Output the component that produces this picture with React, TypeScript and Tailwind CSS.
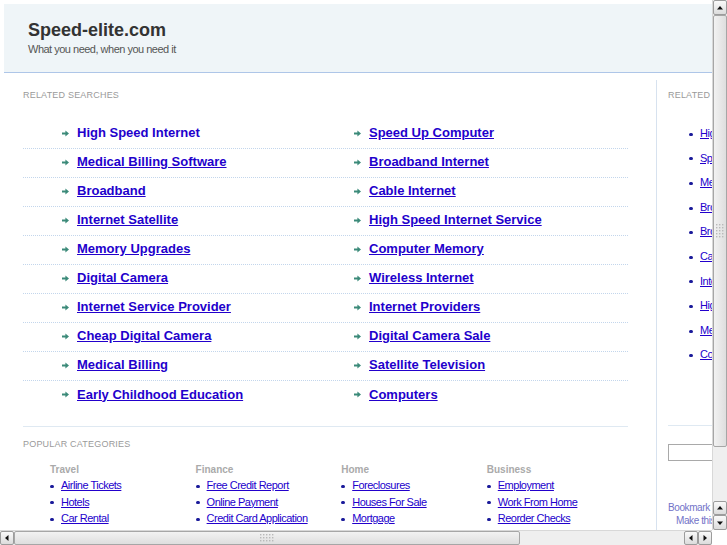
import React from "react";

const related: [string, string][] = [
  ["High Speed Internet", "Speed Up Computer"],
  ["Medical Billing Software", "Broadband Internet"],
  ["Broadband", "Cable Internet"],
  ["Internet Satellite", "High Speed Internet Service"],
  ["Memory Upgrades", "Computer Memory"],
  ["Digital Camera", "Wireless Internet"],
  ["Internet Service Provider", "Internet Providers"],
  ["Cheap Digital Camera", "Digital Camera Sale"],
  ["Medical Billing", "Satellite Television"],
  ["Early Childhood Education", "Computers"],
];

const categories = [
  { title: "Travel", links: ["Airline Tickets", "Hotels", "Car Rental"] },
  { title: "Finance", links: ["Free Credit Report", "Online Payment", "Credit Card Application"] },
  { title: "Home", links: ["Foreclosures", "Houses For Sale", "Mortgage"] },
  { title: "Business", links: ["Employment", "Work From Home", "Reorder Checks"] },
];

const sidebarLinks = [
  "High Speed Internet",
  "Speed Up Computer",
  "Medical Billing Software",
  "Broadband",
  "Broadband Internet",
  "Cable Internet",
  "Internet Satellite",
  "High Speed Internet Service",
  "Memory Upgrades",
  "Computer Memory",
];

function Arrow() {
  return (
    <svg width="7" height="7" viewBox="0 0 7 7" className="shrink-0">
      <path d="M0 2.6h3.4V0.6L7 3.5 3.4 6.4V4.4H0z" fill="#3b8a79" />
    </svg>
  );
}

function Bullet() {
  return <span className="w-[4px] h-[3px] mt-[2px] rounded-full bg-[#1a1a9a] shrink-0" />;
}

function SearchLink({ text, plain }: { text: string; plain?: boolean }) {
  return (
    <div className="w-[292px] shrink-0 pl-[39px] flex items-center gap-[8px]">
      <Arrow />
      <a
        href="#"
        className={`text-[13px] font-bold text-[#2200cc] leading-[16px] ${plain ? "no-underline" : "underline"}`}
      >
        {text}
      </a>
    </div>
  );
}

function Triangle({ dir }: { dir: "up" | "down" | "left" | "right" }) {
  const d = {
    up: "M1 5.5L4 2l3 3.5z",
    down: "M1 2.5L4 6l3-3.5z",
    left: "M5.5 1L2 4l3.5 3z",
    right: "M2.5 1L6 4 2.5 7z",
  }[dir];
  return (
    <svg width="8" height="8" viewBox="0 0 8 8">
      <path d={d} fill="#111" />
    </svg>
  );
}

function ScrollButton({ dir, className }: { dir: "up" | "down" | "left" | "right"; className: string }) {
  return (
    <div
      className={`${className} flex items-center justify-center border border-[#9c9c9c] rounded-[2px] bg-gradient-to-b from-[#fafafa] to-[#dcdcdc] box-border`}
    >
      <Triangle dir={dir} />
    </div>
  );
}

function Grip({ vertical }: { vertical?: boolean }) {
  const cols = vertical ? 3 : 5;
  const rows = vertical ? 5 : 3;
  const dots = [];
  for (let r = 0; r < rows; r++)
    for (let c = 0; c < cols; c++)
      dots.push(<rect key={`${r}-${c}`} x={c * 3} y={r * 3} width="1.4" height="1.4" fill="#b9b9b9" />);
  return (
    <svg width={cols * 3} height={rows * 3}>
      {dots}
    </svg>
  );
}

export default function App() {
  return (
    <div className="w-[727px] h-[545px] overflow-hidden flex flex-col bg-white font-['Liberation_Sans',Arial,sans-serif]">
      <div className="flex h-[530px]">
        {/* page */}
        <div className="w-[712px] overflow-hidden">
          <div className="w-[1000px] pt-[4px] pl-[4px]">
            <header className="h-[69px] bg-[#eff5f8] border-b border-[#aec6e8] pl-[24px] pt-[15px]">
              <h1 className="text-[18px] leading-[22px] font-bold text-[#333]">Speed-elite.com</h1>
              <p className="mt-[2px] text-[11px] leading-[13px] tracking-[-0.5px] text-[#555]">
                What you need, when you need it
              </p>
            </header>

            <div className="flex pl-[19px] pt-[7px]">
              {/* main column */}
              <div className="w-[605px] shrink-0">
                <h2 className="pt-[9px] text-[9px] leading-[12px] text-[#9a9a9a] tracking-[0.2px] uppercase">
                  Related Searches
                </h2>
                <div className="mt-[19px]">
                  {related.map(([a, b], i) => (
                    <div
                      key={a}
                      className={`flex items-center h-[29px] pb-[2px] ${
                        i < related.length - 1 ? "border-b border-dotted border-[#c3d6ec]" : ""
                      }`}
                    >
                      <SearchLink text={a} plain={i === 0} />
                      <SearchLink text={b} />
                    </div>
                  ))}
                </div>
                <div className="mt-[16px] border-t border-[#dfe9f2]" />
                <h2 className="mt-[11px] text-[9px] leading-[12px] text-[#9a9a9a] tracking-[0.2px] uppercase">
                  Popular Categories
                </h2>
                <div className="flex pl-[27px] mt-[14px]">
                  {categories.map((cat) => (
                    <div key={cat.title} className="w-[145.6px] shrink-0">
                      <h3 className="text-[10px] leading-[12px] font-bold text-[#aaa]">{cat.title}</h3>
                      <ul className="mt-[1px]">
                        {cat.links.map((l) => (
                          <li key={l} className="flex items-center gap-[7px] leading-[16.5px]">
                            <Bullet />
                            <a href="#" className="text-[11px] tracking-[-0.5px] text-[#2200cc] underline">
                              {l}
                            </a>
                          </li>
                        ))}
                      </ul>
                    </div>
                  ))}
                </div>
              </div>

              {/* sidebar */}
              <aside className="ml-[28px] w-[220px] shrink-0 border-l border-[#d7e2ef] pl-[11px] h-[460px]">
                <h2 className="pt-[9px] text-[9px] leading-[12px] text-[#9a9a9a] tracking-[0.2px] uppercase">
                  Related Searches
                </h2>
                <ul className="mt-[20px] pl-[21px]">
                  {sidebarLinks.map((l) => (
                    <li key={l} className="flex items-center gap-[7px] h-[24.6px]">
                      <Bullet />
                      <a href="#" className="text-[11px] tracking-[-0.5px] text-[#2200cc] underline whitespace-nowrap">
                        {l}
                      </a>
                    </li>
                  ))}
                </ul>
                <div className="mt-[58px] border-t border-[#dfe9f2]" />
                <input
                  type="text"
                  className="mt-[18px] w-[160px] h-[17px] border border-[#a9a9a9] bg-white"
                />
                <p className="mt-[37px] text-[10px] leading-[13px] tracking-[-0.4px] text-[#7373c8] whitespace-nowrap">
                  Bookmark this page
                </p>
                <p className="pl-[8px] text-[10px] leading-[13px] tracking-[-0.4px] text-[#7373c8] whitespace-nowrap">
                  Make this your homepage
                </p>
              </aside>
            </div>
          </div>
        </div>

        {/* vertical scrollbar */}
        <div className="w-[15px] flex flex-col bg-[#efefef] border-l border-[#d8d8d8]">
          <ScrollButton dir="up" className="h-[15px] w-full" />
          <div className="h-[432px] w-full flex items-center justify-center border border-[#a6a6a6] rounded-[2px] bg-gradient-to-r from-[#f2f2f2] to-[#dedede] box-border">
            <Grip vertical />
          </div>
          <div className="flex-1" />
          <ScrollButton dir="up" className="h-[14px] w-full" />
          <ScrollButton dir="down" className="h-[15px] w-full" />
        </div>
      </div>

      {/* horizontal scrollbar */}
      <div className="flex h-[15px]">
        <div className="w-[712px] flex bg-[#efefef] border-t border-[#d8d8d8]">
          <ScrollButton dir="left" className="w-[14px] h-full" />
          <div className="w-[506px] h-full flex items-center justify-center border border-[#a6a6a6] rounded-[2px] bg-gradient-to-b from-[#f2f2f2] to-[#dedede] box-border">
            <Grip />
          </div>
          <div className="flex-1" />
          <ScrollButton dir="left" className="w-[14px] h-full" />
          <ScrollButton dir="right" className="w-[14px] h-full" />
        </div>
        <div className="flex-1 bg-white" />
      </div>
    </div>
  );
}
